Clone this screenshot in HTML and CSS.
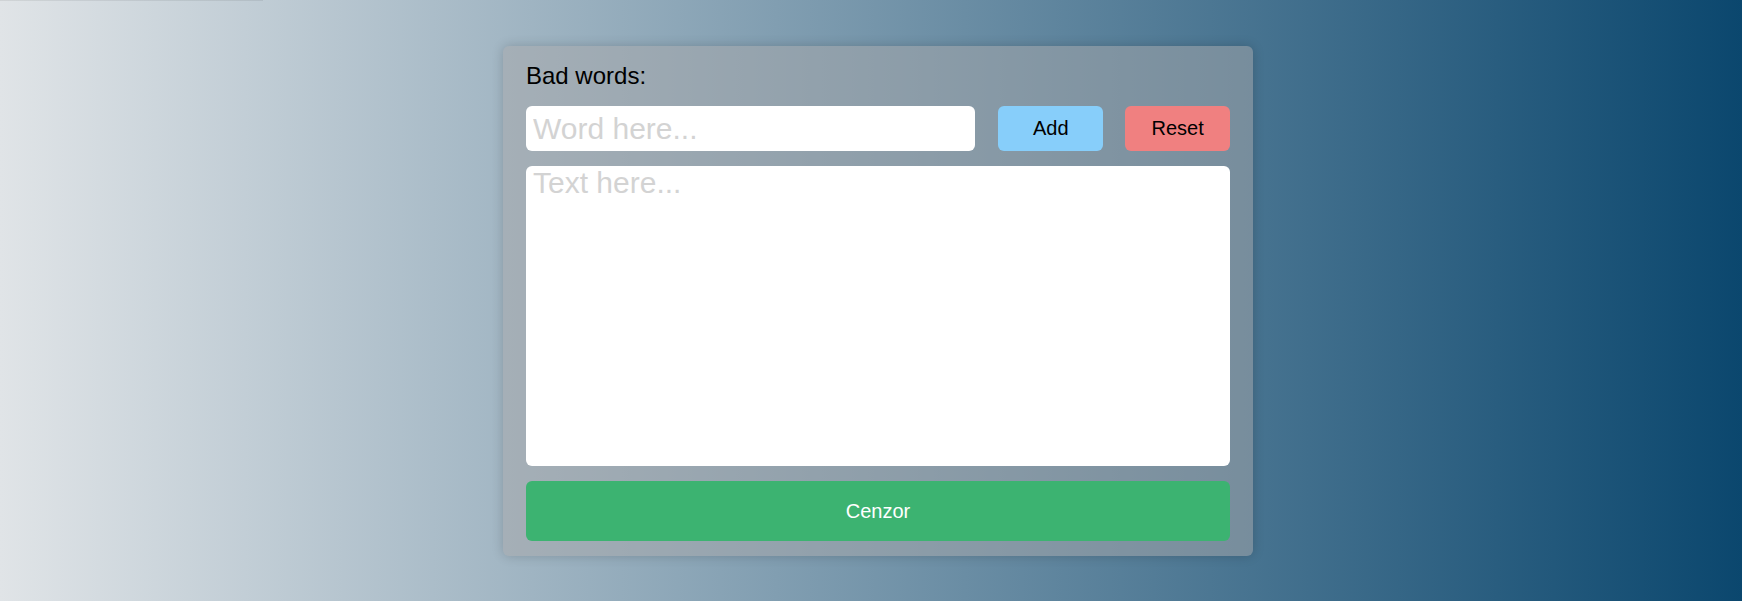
FILE: index.html
```html
<!DOCTYPE html>
<html lang="en">
<head>
<meta charset="utf-8">
<title>Cenzor</title>
<link rel="stylesheet" href="styles.css">
</head>
<body>
<div class="topline"></div>
<main class="page">
  <section class="card">
    <label class="title" for="word">Bad words:</label>
    <div class="row">
      <input id="word" class="word" type="text" placeholder="Word here...">
      <button class="btn add">Add</button>
      <button class="btn reset">Reset</button>
    </div>
    <textarea class="text" placeholder="Text here..."></textarea>
    <button class="btn cenzor">Cenzor</button>
  </section>
</main>
</body>
</html>
```
FILE: styles.css
```css
html, body {
  margin: 0;
  padding: 0;
}
body {
  min-height: 100vh;
  background: linear-gradient(to right, #e0e4e7, #0b476e);
  font-family: "Liberation Sans", Arial, sans-serif;
  overflow: hidden;
}
.topline {
  width: 263px;
  height: 1px;
  background: rgba(0, 0, 0, 0.07);
}
.page {
  display: flex;
  justify-content: center;
  padding-left: 14px;
  padding-top: 45px;
}
.card {
  width: 750px;
  box-sizing: border-box;
  padding: 16px 23px 15px;
  background: rgba(168, 168, 170, 0.5);
  border-radius: 6px;
  box-shadow: 0 0 12px rgba(0, 0, 0, 0.18);
  display: flex;
  flex-direction: column;
}
.title {
  font-size: 24px;
  line-height: 27px;
  color: #000;
  margin-bottom: 17px;
}
.row {
  display: flex;
  gap: 23px;
  height: 45px;
  margin-bottom: 15px;
}
.word {
  width: 450px;
  box-sizing: border-box;
  height: 45px;
  border: none;
  border-radius: 6px;
  padding: 0 7px;
  font-family: "Liberation Sans", Arial, sans-serif;
  font-size: 30px;
  background: #fff;
  outline: none;
}
.word::placeholder,
.text::placeholder {
  color: #d3d3d3;
}
.btn {
  border: none;
  border-radius: 6px;
  font-family: "Liberation Sans", Arial, sans-serif;
  font-size: 20px;
  color: #000;
  padding: 0;
  cursor: pointer;
}
.add {
  width: 105px;
  background: #87cefa;
}
.reset {
  width: 105px;
  margin-left: -1px;
  background: #f08080;
}
.text {
  height: 300px;
  box-sizing: border-box;
  border: none;
  border-radius: 6px;
  padding: 0 7px;
  margin: 0 0 15px;
  font-family: "Liberation Sans", Arial, sans-serif;
  font-size: 30px;
  resize: none;
  outline: none;
  display: block;
}
.cenzor {
  height: 60px;
  width: 100%;
  background: #3cb371;
  color: #fff;
}
```
